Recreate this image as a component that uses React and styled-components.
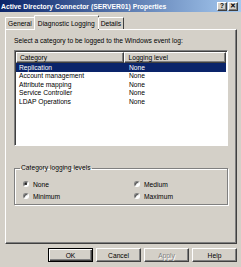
import React from "react";
import styled, { createGlobalStyle, css } from "styled-components";

const Global = createGlobalStyle`
  html, body { margin: 0; padding: 0; background: #d4d0c8; }
  body { font-family: "Liberation Sans", Arial, sans-serif; font-size: 6.7px; color: #000; }
  * { box-sizing: border-box; }
`;

const Window = styled.div`
  width: 241px;
  height: 267px;
  background: #d4d0c8;
  display: flex;
  flex-direction: column;
  overflow: hidden;
`;

const TitleBar = styled.div`
  height: 12px;
  background: linear-gradient(to right, #0a246a, #a6caf0);
  display: flex;
  align-items: center;
  padding: 0 3px 0 1px;
`;

const TitleText = styled.div`
  flex: 1;
  color: #fff;
  font-weight: bold;
  font-size: 6.8px;
  white-space: nowrap;
`;

const CaptionButton = styled.div`
  width: 10px;
  height: 9px;
  background: #d4d0c8;
  border: 1px solid;
  border-color: #fff #404040 #404040 #fff;
  box-shadow: inset -1px -1px 0 #808080;
  display: flex;
  align-items: center;
  justify-content: center;
  font-size: 6.5px;
  font-weight: bold;
  line-height: 1;
  margin-left: ${(p) => (p.$gap ? "1px" : "0")};
`;

const Body = styled.div`
  flex: 1;
  display: flex;
  flex-direction: column;
  padding: 3px 4px 0 5px;
`;

const TabRow = styled.div`
  display: flex;
  align-items: flex-end;
  height: 14px;
  position: relative;
  z-index: 1;
`;

const Tab = styled.div`
  height: ${(p) => (p.$active ? "15px" : "12px")};
  padding: 0 ${(p) => (p.$active ? "3px" : "2px")};
  display: flex;
  align-items: center;
  justify-content: center;
  border: 1px solid;
  border-bottom: none;
  border-color: #fff #404040 transparent #fff;
  background: #d4d0c8;
  margin-bottom: ${(p) => (p.$active ? "-1px" : "0")};
  margin-left: ${(p) => (p.$first ? "0" : "-1px")};
  white-space: nowrap;
  border-radius: 1px 1px 0 0;
`;

const Panel = styled.div`
  height: 215px;
  border: 1px solid;
  border-color: #fff #404040 #404040 #fff;
  box-shadow: inset -1px -1px 0 #808080;
  padding: 6px 8px 0 8px;
  display: flex;
  flex-direction: column;
`;

const Prompt = styled.div`
  height: 14px;
  line-height: 10px;
`;

const List = styled.div`
  height: 96px;
  background: #fff;
  border: 1px solid;
  border-color: #808080 #fff #fff #808080;
  box-shadow: inset 1px 1px 0 #404040;
  padding: 1px 1px 0 1px;
  display: flex;
  flex-direction: column;
`;

const HeaderRow = styled.div`
  display: flex;
  height: 11px;
`;

const HeaderCell = styled.div`
  width: ${(p) => p.$w}px;
  background: #d4d0c8;
  border: 1px solid;
  border-color: #fff #404040 #404040 #fff;
  box-shadow: inset -1px -1px 0 #808080;
  padding-left: 3px;
  display: flex;
  align-items: center;
`;

const Row = styled.div`
  display: flex;
  height: 8.5px;
  align-items: center;
  background: ${(p) => (p.$selected ? "#0a246a" : "transparent")};
  color: ${(p) => (p.$selected ? "#fff" : "#000")};
`;

const Cell = styled.div`
  width: ${(p) => p.$w}px;
  padding-left: 3px;
  white-space: nowrap;
`;

const Group = styled.fieldset`
  margin: 18px 0 0 0;
  padding: 6px 0 0 8px;
  height: 41px;
  border: 1px solid #808080;
  box-shadow: 1px 1px 0 #fff, inset 1px 1px 0 #fff;
  display: grid;
  grid-template-columns: 111px 1fr;
  grid-auto-rows: 12px;
  align-items: center;
`;

const Legend = styled.legend`
  padding: 0 1px;
  margin-left: -3px;
  line-height: 8px;
`;

const RadioItem = styled.div`
  display: flex;
  align-items: center;
  gap: 4px;
`;

const RadioCircle = styled.span`
  width: 6px;
  height: 6px;
  border-radius: 50%;
  background: #fff;
  border: 1px solid;
  border-color: #808080 #fff #fff #808080;
  box-shadow: inset 1px 1px 0 #404040;
  display: flex;
  align-items: center;
  justify-content: center;
  ${(p) =>
    p.$checked &&
    css`
      &::after {
        content: "";
        width: 2px;
        height: 2px;
        border-radius: 50%;
        background: #000;
      }
    `}
`;

const ButtonRow = styled.div`
  display: flex;
  justify-content: flex-end;
  gap: 3px;
  padding: 4px 0 0 0;
`;

const Button = styled.div`
  width: 45px;
  height: 14px;
  display: flex;
  align-items: center;
  justify-content: center;
  background: #d4d0c8;
  border: 1px solid;
  border-color: #fff #404040 #404040 #fff;
  box-shadow: inset -1px -1px 0 #808080;
  color: ${(p) => (p.$disabled ? "#808080" : "#000")};
  text-shadow: ${(p) => (p.$disabled ? "1px 1px 0 #fff" : "none")};
  ${(p) =>
    p.$default &&
    css`
      border-color: #000;
      box-shadow: inset 1px 1px 0 #fff, inset -1px -1px 0 #404040, inset -2px -2px 0 #808080;
    `}
`;

const rows = [
  ["Replication", "None"],
  ["Account management", "None"],
  ["Attribute mapping", "None"],
  ["Service Controller", "None"],
  ["LDAP Operations", "None"],
];

function Radio({ label, checked }) {
  return (
    <RadioItem>
      <RadioCircle $checked={checked} />
      <span>{label}</span>
    </RadioItem>
  );
}

export default function App() {
  return (
    <>
      <Global />
      <Window>
        <TitleBar>
          <TitleText>Active Directory Connector (SERVER01) Properties</TitleText>
          <CaptionButton>?</CaptionButton>
          <CaptionButton $gap>✕</CaptionButton>
        </TitleBar>
        <Body>
          <TabRow>
            <Tab $first>General</Tab>
            <Tab $active>Diagnostic Logging</Tab>
            <Tab>Details</Tab>
          </TabRow>
          <Panel>
            <Prompt>Select a category to be logged to the Windows event log:</Prompt>
            <List>
              <HeaderRow>
                <HeaderCell $w={110}>Category</HeaderCell>
                <HeaderCell $w={103}>Logging level</HeaderCell>
              </HeaderRow>
              {rows.map(([c, l], i) => (
                <Row key={c} $selected={i === 0}>
                  <Cell $w={110}>{c}</Cell>
                  <Cell $w={100}>{l}</Cell>
                </Row>
              ))}
            </List>
            <Group>
              <Legend>Category logging levels</Legend>
              <Radio label="None" checked />
              <Radio label="Medium" />
              <Radio label="Minimum" />
              <Radio label="Maximum" />
            </Group>
          </Panel>
          <ButtonRow>
            <Button $default>OK</Button>
            <Button>Cancel</Button>
            <Button $disabled>Apply</Button>
            <Button>Help</Button>
          </ButtonRow>
        </Body>
      </Window>
    </>
  );
}
